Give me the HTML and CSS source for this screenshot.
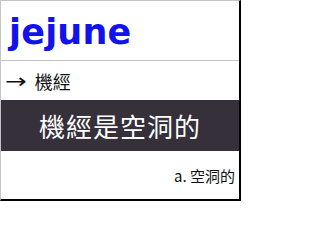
FILE: index.html
```html
<!DOCTYPE html>
<html>
<head>
<meta charset="utf-8">
<link rel="stylesheet" href="styles.css">
</head>
<body>
<div class="card">
  <header class="head"><h1 class="word">jejune</h1></header>
  <div class="pron"><span class="arrow">→</span> 機經</div>
  <div class="sentence">機經是空洞的</div>
  <div class="answer">a. 空洞的</div>
</div>
</body>
</html>
```
FILE: styles.css
```css
html, body {
  margin: 0;
  padding: 0;
  background: #fff;
}
.card {
  box-sizing: border-box;
  width: 241px;
  height: 201px;
  border-top: 1px solid #c4c4c4;
  border-left: 1px solid #c4c4c4;
  border-right: 2px solid #000;
  border-bottom: 2px solid #000;
  display: flex;
  flex-direction: column;
  font-family: "Noto Sans CJK TC", "DejaVu Sans", sans-serif;
}
.head {
  height: 59px;
  border-bottom: 1px solid #c4c4c4;
  display: flex;
  align-items: flex-end;
  padding-left: 8px;
}
.word {
  margin: 0 0 10px 0;
  font-family: "DejaVu Sans", sans-serif;
  font-weight: bold;
  font-size: 35px;
  line-height: 1;
  color: #1212ec;
  letter-spacing: 0.2px;
}
.pron {
  height: 39px;
  display: flex;
  align-items: center;
  padding-left: 4px;
  font-size: 18px;
  color: #111;
}
.arrow {
  font-family: "DejaVu Sans", sans-serif;
  font-size: 20px;
  margin-right: 13px;
  transform: scaleX(1.3);
  display: inline-block;
  transform-origin: left center;
}
.sentence {
  height: 51px;
  background: #353039;
  color: #fff;
  font-size: 26px;
  display: flex;
  align-items: center;
  justify-content: center;
  letter-spacing: 1px;
}
.answer {
  flex: 1;
  display: flex;
  align-items: center;
  justify-content: flex-end;
  padding-right: 4px;
  font-size: 15px;
  color: #111;
}
```
